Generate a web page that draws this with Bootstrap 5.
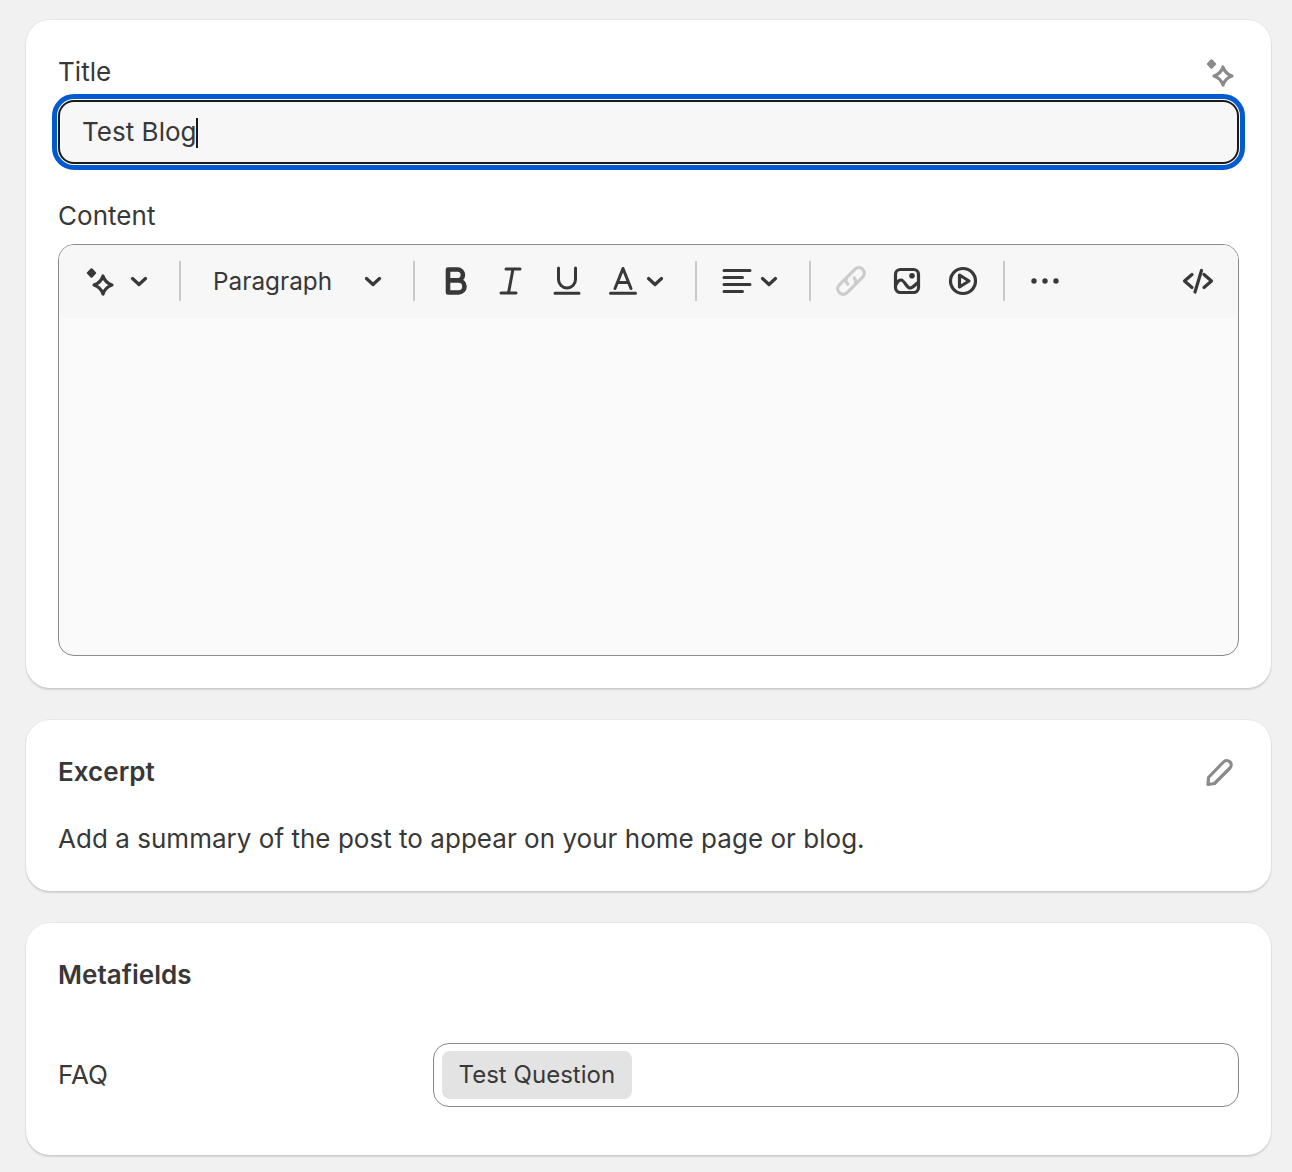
<!doctype html>
<html lang="en">
<head>
<meta charset="utf-8">
<title>Blog post</title>
<link href="https://cdn.jsdelivr.net/npm/bootstrap@5.3.0/dist/css/bootstrap.min.css" rel="stylesheet">
<style>
html,body{height:1172px;overflow:hidden}
body{background:#f1f1f1;color:#383838;font-family:Inter,"Liberation Sans",sans-serif;font-size:26px;line-height:40px;letter-spacing:.03px}
.page-wrap{padding:20px 21px 0 26px}
.post-card{border:0;border-radius:24px;background:#fff;padding:32px;margin-bottom:32px;color:#383838;box-shadow:0 0 0 1px rgba(0,0,0,.035),0 2px 2px rgba(0,0,0,.13)}
.post-label{margin:0 0 8px;line-height:40px;font-size:26px;font-weight:400;display:block}
.title-input.form-control{height:64px;padding:0 22px;border:2px solid #1a1a1a;border-radius:16px;background:#f7f7f7;color:#383838;font-size:26px;line-height:60px;outline:5px solid #005bd3;outline-offset:1px;margin-bottom:32px}
.caret-bar{display:inline-block;width:2px;height:30px;background:#1a1a1a;vertical-align:-7px;margin-left:-1px}
.editor-box{height:412px;border:1px solid #8a8a8a;border-radius:16px;background:#fafafa;overflow:hidden}
.tool-row{height:72px;background:#f7f7f7;padding:16px 12px 16px 14px}
.tool-sep{width:2px;height:40px;background:#cacaca;margin:0 12px;flex:none}
.tool-sep.after-chev{margin-left:30px}
.tool-sep.after-para{margin-left:28px}
.tool-slot{width:56px;height:40px;flex:none;display:flex;justify-content:center}
.tool-para{margin-left:20px;margin-right:33px;font-size:24.300px;line-height:40px;width:119px;white-space:nowrap;font-weight:400}
.ico{width:40px;height:40px;fill:none;stroke:#383838;stroke-width:3.200;stroke-linecap:round;stroke-linejoin:round;flex:none}
.ico .solid{fill:#383838;stroke:none}
.ico.thin{stroke-width:3}
.ico.muted{stroke:#8a8a8a}
.ico.muted .solid{fill:#8a8a8a}
.ico.faint{stroke:#cccccc}
.ico.heavy{stroke-width:4.600}
.ico.spark{stroke-width:3.200}
.ico.tool-chev{width:20px;height:40px;flex:none}
.ico.tool-chev.tuck{margin-left:-6px}
.head-ico{margin-right:-2px}
.pencil-ico{margin-right:0}
.section-title{margin:0;font-size:26px;line-height:40px;font-weight:600;color:#383838}
.excerpt-head{margin-bottom:27px}
.excerpt-text{margin:0;font-size:26px;line-height:40px;font-weight:400}
.meta-head{margin-bottom:48px}
.faq-label{width:375px;flex:none;font-weight:400}
.faq-field{flex:1;height:64px;border:1px solid #8a8a8a;border-radius:16px;background:#fff;padding:7px 8px}
.faq-chip{height:48px;border-radius:8px;background:#e3e3e3;padding:0 17px 0 16.500px;line-height:48px;font-weight:400;font-size:24px}
.last-card{padding-bottom:48px}
</style>
</head>
<body>
<div class="page-wrap">

<div class="card post-card">
  <div class="d-flex justify-content-between align-items-start">
    <label class="post-label">Title</label>
    <svg class="ico muted spark head-ico" viewBox="0 0 40 40"><rect class="solid" x="6.800" y="8.300" width="7.400" height="7.400" rx="1.200" transform="rotate(45 10.500 12)"/><path d="M22 15Q24 21.500 31 24Q24 26.500 22 33Q20 26.500 13 24Q20 21.500 22 15Z"/></svg>
  </div>
  <div class="form-control title-input">Test Blog<span class="caret-bar"></span></div>

  <label class="post-label">Content</label>
  <div class="editor-box">
    <div class="tool-row d-flex align-items-start">
      <div class="tool-slot"><svg class="ico spark" viewBox="0 0 40 40"><rect class="solid" x="6.800" y="8.300" width="7.400" height="7.400" rx="1.200" transform="rotate(45 10.500 12)"/><path d="M22 15Q24 21.500 31 24Q24 26.500 22 33Q20 26.500 13 24Q20 21.500 22 15Z"/></svg></div>
      <svg class="tool-chev ico" viewBox="0 0 20 40"><path d="M3.500 17.500L10 23.500L16.500 17.500"/></svg>
      <div class="tool-sep after-chev"></div>
      <div class="tool-para">Paragraph</div>
      <svg class="tool-chev ico" viewBox="0 0 20 40"><path d="M1.500 17.500L8 23.500L14.500 17.500"/></svg>
      <div class="tool-sep after-para"></div>
      <div class="tool-slot"><svg class="ico heavy" viewBox="0 0 40 40"><path d="M13 8.500H22.500a5.300 5.300 0 0 1 0 10.800H13ZM13 19.500H23.500a6 6 0 0 1 0 12H13Z"/></svg></div>
      <div class="tool-slot"><svg class="ico thin" viewBox="0 0 40 40"><path d="M15 8H29M10 32H25M22 8L17.500 32"/></svg></div>
      <div class="tool-slot"><svg class="ico thin" viewBox="0 0 40 40"><path d="M11.500 7V18.500a8.500 8.500 0 0 0 17 0V7M8 32.300H32"/></svg></div>
      <div class="tool-slot"><svg class="ico thin" viewBox="0 0 40 40"><path d="M12 27.500L20 7.500L28 27.500M14.500 21.500H25.500M7.500 32.300H32.500"/></svg></div>
      <svg class="tool-chev tuck ico" viewBox="0 0 20 40"><path d="M3.500 17.500L10 23.500L16.500 17.500"/></svg>
      <div class="tool-sep after-chev"></div>
      <div class="tool-slot"><svg class="ico thin" viewBox="0 0 40 40"><path d="M7 9.500H33M7 16.500H25.500M7 23.500H33M7 30.500H25.500"/></svg></div>
      <svg class="tool-chev tuck ico" viewBox="0 0 20 40"><path d="M3.500 17.500L10 23.500L16.500 17.500"/></svg>
      <div class="tool-sep after-chev"></div>
      <div class="tool-slot"><svg class="ico faint" viewBox="0 0 40 40"><g transform="rotate(-45 20 20)"><path d="M19 14.500H9a5.500 5.500 0 0 0 0 11H19a5.500 5.500 0 0 0 5.500-5.500"/><path d="M15.500 20a5.500 5.500 0 0 1 5.500-5.500H31a5.500 5.500 0 0 1 0 11H21"/></g></svg></div>
      <div class="tool-slot"><svg class="ico" viewBox="0 0 40 40"><rect x="8.500" y="8.500" width="23" height="23" rx="5"/><circle class="solid" cx="25" cy="14.800" r="2.800"/><path d="M9 23.500c1.500-3 3-4.500 5-4.500c3.500 0 5.500 8 9 8c3 0 5-3.500 8-5.500"/></svg></div>
      <div class="tool-slot"><svg class="ico" viewBox="0 0 40 40"><circle cx="20" cy="20" r="12.500"/><path d="M16.500 14L26 20L16.500 26Z"/></svg></div>
      <div class="tool-sep"></div>
      <div class="tool-slot"><svg class="ico" viewBox="0 0 40 40"><circle class="solid" cx="9" cy="20" r="2.700"/><circle class="solid" cx="20" cy="20" r="2.700"/><circle class="solid" cx="31" cy="20" r="2.700"/></svg></div>
      <div class="tool-slot ms-auto"><svg class="ico" viewBox="0 0 40 40"><path d="M14 13.500L6.500 20L14 26.500M26 13.500L33.500 20L26 26.500M23.500 9.500L17 31"/></svg></div>
    </div>
  </div>
</div>

<div class="card post-card">
  <div class="d-flex justify-content-between align-items-start excerpt-head">
    <h2 class="section-title">Excerpt</h2>
    <svg class="ico muted pencil-ico" viewBox="0 0 40 40"><path d="M9.500 25.500L24.500 10a4.300 4.300 0 0 1 6.500 6L15.500 31.500L9 32.500Z"/></svg>
  </div>
  <p class="excerpt-text">Add a summary of the post to appear on your home page or blog.</p>
</div>

<div class="card post-card last-card">
  <h2 class="section-title meta-head">Metafields</h2>
  <div class="d-flex align-items-center">
    <div class="faq-label">FAQ</div>
    <div class="faq-field d-flex"><div class="faq-chip">Test Question</div></div>
  </div>
</div>

</div>
<script src="https://cdn.jsdelivr.net/npm/bootstrap@5.3.0/dist/js/bootstrap.bundle.min.js"></script>
</body>
</html>
